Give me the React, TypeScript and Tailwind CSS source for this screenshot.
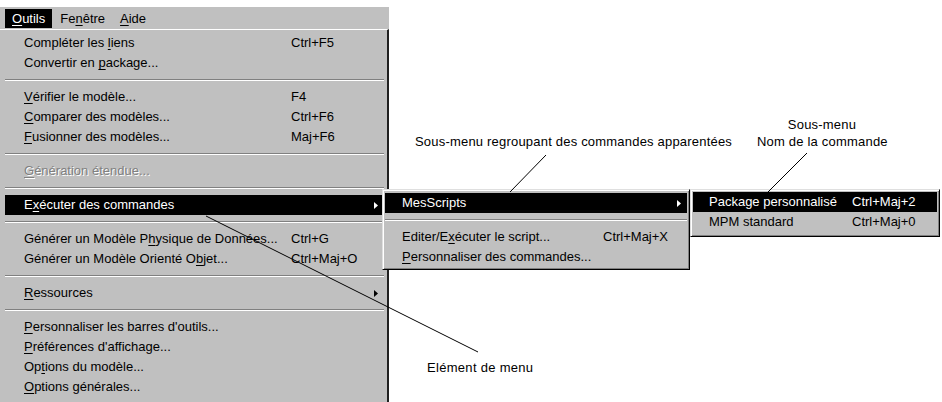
import type { ReactNode } from 'react';

type Entry =
  | 'sep'
  | { label: ReactNode; shortcut?: string; arrow?: boolean; active?: boolean; disabled?: boolean };

// mnemonic letter
const U = ({ children }: { children: ReactNode }) => (
  <span className="underline underline-offset-[2px] decoration-1">{children}</span>
);

const Arrow = () => (
  <svg width="4" height="7" viewBox="0 0 4 7" className="block">
    <path d="M0 0 L4 3.5 L0 7 Z" fill="currentColor" />
  </svg>
);

const mainItems: Entry[] = [
  { label: <>Compléter les <U>l</U>iens</>, shortcut: 'Ctrl+F5' },
  { label: <>Convertir en <U>p</U>ackage...</> },
  'sep',
  { label: <><U>V</U>érifier le modèle...</>, shortcut: 'F4' },
  { label: <><U>C</U>omparer des modèles...</>, shortcut: 'Ctrl+F6' },
  { label: <><U>F</U>usionner des modèles...</>, shortcut: 'Maj+F6' },
  'sep',
  { label: <><U>G</U>énération étendue...</>, disabled: true },
  'sep',
  { label: <>E<U>x</U>écuter des commandes</>, arrow: true, active: true },
  'sep',
  { label: <>Générer un Modèle P<U>h</U>ysique de Données...</>, shortcut: 'Ctrl+G' },
  { label: <>Générer un Modèle Orienté O<U>b</U>jet...</>, shortcut: 'Ctrl+Maj+O' },
  'sep',
  { label: <><U>R</U>essources</>, arrow: true },
  'sep',
  { label: <><U>P</U>ersonnaliser les barres d'outils...</> },
  { label: <><U>P</U>références d'affichage...</> },
  { label: <>Op<U>t</U>ions du modèle...</> },
  { label: <><U>O</U>ptions générales...</> },
];

const subItems: Entry[] = [
  { label: 'MesScripts', arrow: true, active: true },
  'sep',
  { label: <>Editer/E<U>x</U>écuter le script...</>, shortcut: 'Ctrl+Maj+X' },
  { label: <><U>P</U>ersonnaliser des commandes...</> },
];

const subSubItems: Entry[] = [
  { label: 'Package personnalisé', shortcut: 'Ctrl+Maj+2', active: true },
  { label: 'MPM standard', shortcut: 'Ctrl+Maj+0' },
];

function MenuList({ items, padLeft, labelWidth }: { items: Entry[]; padLeft: string; labelWidth: string }) {
  return (
    <>
      {items.map((it, i) =>
        it === 'sep' ? (
          <div key={i} className="h-[14px] flex items-center">
            <div className="w-full h-[2px] border-t border-[#808080] border-b border-b-white" />
          </div>
        ) : (
          <div
            key={i}
            className={
              'h-[20px] flex items-center whitespace-nowrap ' +
              padLeft +
              (it.active ? ' bg-black text-white' : '') +
              (it.disabled ? ' text-[#808080] [text-shadow:1px_1px_0_#fff]' : '')
            }
          >
            <span className={'shrink-0 ' + labelWidth}>{it.label}</span>
            {it.shortcut && <span>{it.shortcut}</span>}
            {it.arrow && (
              <span className="ml-auto mr-[6px]">
                <Arrow />
              </span>
            )}
          </div>
        )
      )}
    </>
  );
}

export default function App() {
  return (
    <div className="relative w-[942px] h-[402px] bg-white overflow-hidden text-black text-[13px] font-['Liberation_Sans',Arial,sans-serif]">
      {/* Main window menu */}
      <div className="w-[389px] pt-[7px]">
        <div className="h-[22px] bg-[#c0c0c0] flex items-start pt-[2px] pl-[5px]">
          <div className="h-[19px] px-[7px] flex items-center bg-black text-white">
            <U>O</U>utils
          </div>
          <div className="h-[19px] px-[8px] flex items-center">
            Fe<U>n</U>être
          </div>
          <div className="h-[19px] px-[7px] flex items-center">
            <U>A</U>ide
          </div>
        </div>
        <div className="h-[373px] bg-[#c0c0c0] border-t border-white border-r-2 border-r-[#202020] pt-[3px] pl-[5px] pr-[3px]">
          <MenuList items={mainItems} padLeft="pl-[19px]" labelWidth="w-[267px]" />
        </div>
      </div>

      {/* Sous-menu */}
      <div className="absolute left-[382px] top-[189px] w-[308px] h-[81px] bg-[#c0c0c0] border border-t-[#dfdfdf] border-l-[#dfdfdf] border-r-black border-b-black shadow-[inset_1px_1px_0_#fff,inset_-1px_-1px_0_#808080] pt-[3px] px-[2px]">
        <MenuList items={subItems} padLeft="pl-[17px]" labelWidth="w-[201px]" />
      </div>

      {/* Sous-sous-menu */}
      <div className="absolute left-[690px] top-[189px] w-[250px] h-[48px] bg-[#c0c0c0] border border-t-[#dfdfdf] border-l-[#dfdfdf] border-r-black border-b-black shadow-[inset_1px_1px_0_#fff,inset_-1px_-1px_0_#808080] pt-[2px] px-[2px]">
        <MenuList items={subSubItems} padLeft="pl-[16px]" labelWidth="w-[143px]" />
      </div>

      {/* Annotations */}
      <div className="absolute left-[415px] top-[133px] leading-[17px] tracking-[0.2px] whitespace-nowrap">
        Sous-menu regroupant des commandes apparentées
      </div>
      <div className="absolute left-[757px] top-[116px] w-[130px] text-center leading-[17px] tracking-[0.2px] whitespace-nowrap">
        <div>Sous-menu</div>
        <div>Nom de la commande</div>
      </div>
      <div className="absolute left-[427px] top-[359px] leading-[17px] tracking-[0.3px] whitespace-nowrap">
        Elément de menu
      </div>

      <svg className="absolute inset-0 pointer-events-none" width="942" height="402">
        <g stroke="black" strokeWidth="1" fill="none">
          <line x1="546" y1="155" x2="510" y2="192" />
          <line x1="807" y1="153" x2="768" y2="192" />
          <line x1="206" y1="216" x2="478" y2="352" />
        </g>
      </svg>
    </div>
  );
}
